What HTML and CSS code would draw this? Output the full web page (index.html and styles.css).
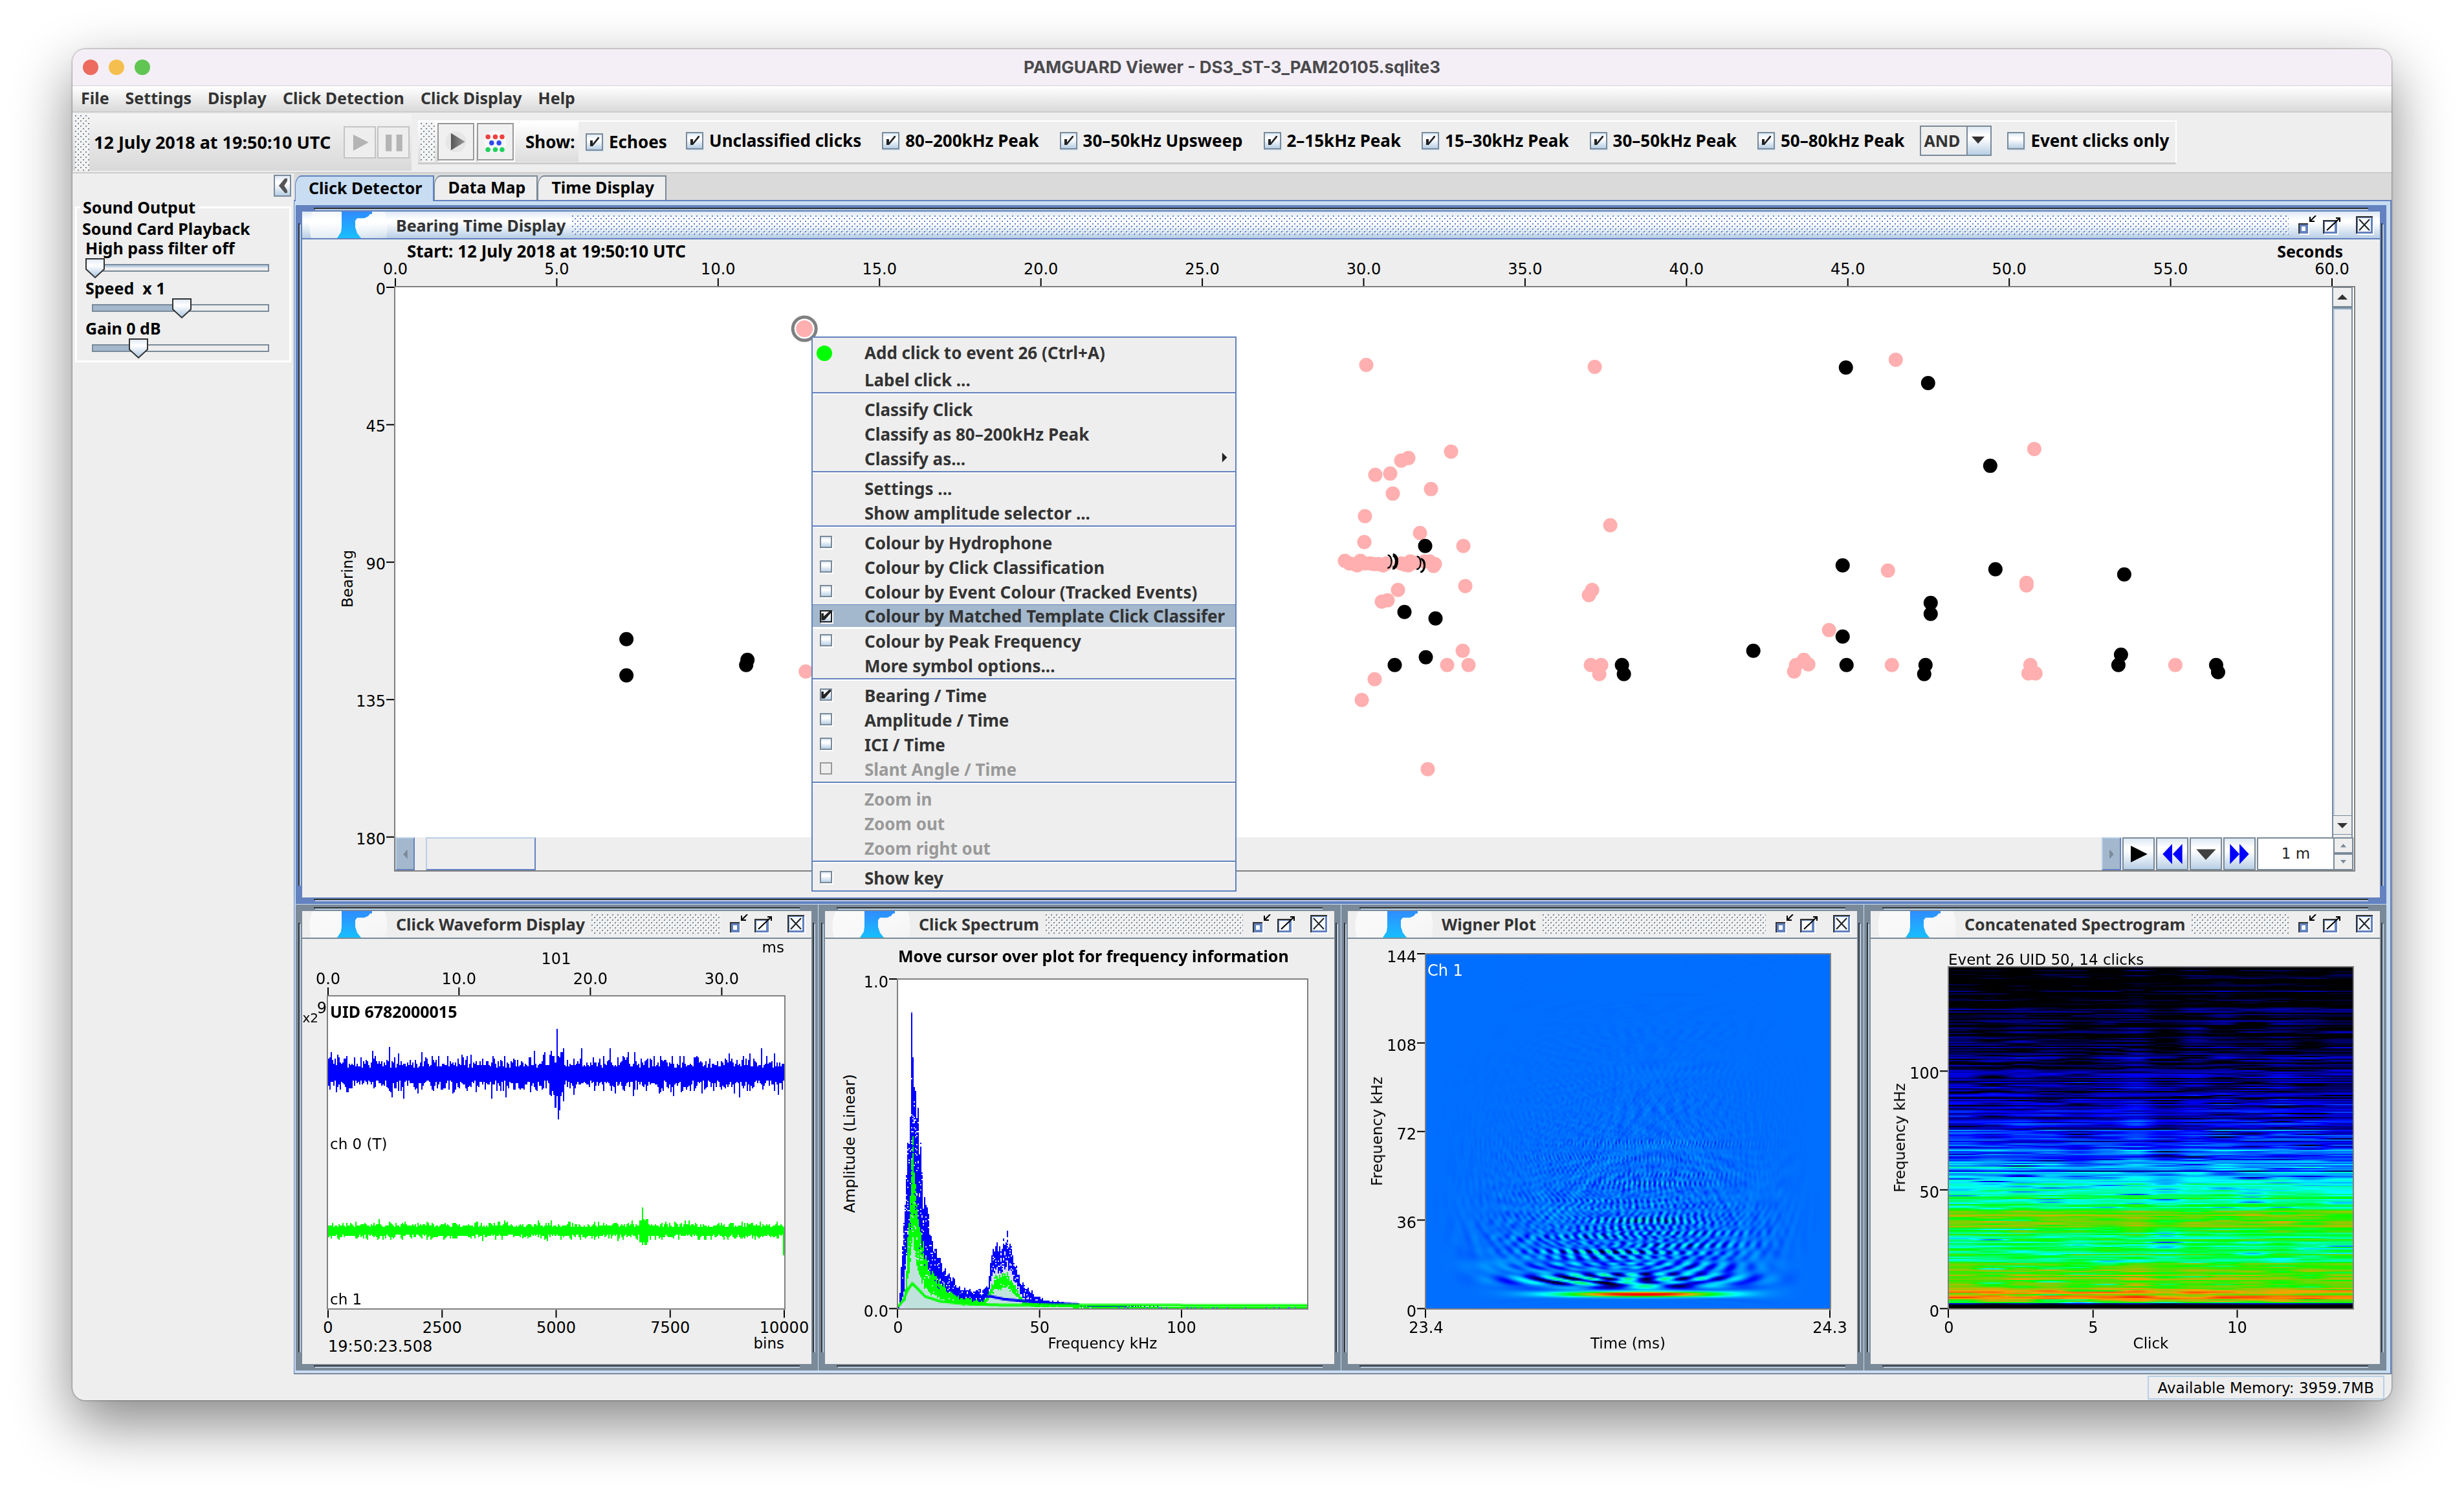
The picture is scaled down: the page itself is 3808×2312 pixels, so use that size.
FILE: index.html
```html
<!DOCTYPE html>
<html lang="en">
<head>
<meta charset="utf-8">
<title>PAMGUARD Viewer - DS3_ST-3_PAM20105.sqlite3</title>
<link rel="stylesheet" href="styles.css">
</head>
<body>
<svg class="defs" aria-hidden="true">
  <defs>
    <linearGradient id="logo-fill" x1="0" y1="0" x2="0" y2="1"><stop offset="0" stop-color="#2f8cff"/><stop offset="1" stop-color="#17bfff"/></linearGradient>
    <linearGradient id="logo-gloss" x1="0" y1="0" x2="1" y2="1"><stop offset="0" stop-color="#fff" stop-opacity=".7"/><stop offset=".6" stop-color="#fff" stop-opacity=".6"/><stop offset="1" stop-color="#fff" stop-opacity=".3"/></linearGradient>
    <linearGradient id="play-fill" x1="0" y1="0" x2="1" y2="0"><stop offset="0" stop-color="#555"/><stop offset="1" stop-color="#999"/></linearGradient>
  </defs>
  <symbol id="logo" viewBox="0 0 124 44" preserveAspectRatio="none">
    <path d="M6 0H118Q124 22 120 44H4Q-2 22 6 0Z" fill="url(#logo-gloss)"/>
    <path d="M51 0H98V4H95L92 8L86 11H75L72 15V26L75 36L81 44H44L50 34L51 26Z" fill="url(#logo-fill)"/>
  </symbol>
  <symbol id="iconify" viewBox="0 0 28 30">
    <path d="M2 14H17V30H2Z" fill="#fff"/><path d="M0 12H15V28H0Z" fill="#333"/><path d="M2 14H15V28H2Z" fill="#6382bf"/><path d="M5 17H11V24H5Z" fill="#fff"/>
    <path d="M18 2V9H25M18 9L27 0" fill="none" stroke="#000" stroke-width="2"/>
  </symbol>
  <symbol id="maximize" viewBox="0 0 28 30">
    <path d="M2 9H24V30H2Z" fill="#fff"/><path d="M0 7H22V28H0Z" fill="#333"/><path d="M2 9H22V28H2Z" fill="#6382bf"/><path d="M3 10H18V25H3Z" fill="#fff"/>
    <path d="M6 23L26 4M20 4H26V10" fill="none" stroke="#000" stroke-width="2"/>
  </symbol>
  <symbol id="close" viewBox="0 0 28 30">
    <path d="M2 3H28V30H2Z" fill="#fff"/><path d="M0 1H26V28H0Z" fill="#333"/><path d="M2 3H26V28H2Z" fill="#6382bf"/><path d="M3 4H23V25H3Z" fill="#f4f8fc"/>
    <path d="M5 6L21 23M21 6L5 23" stroke="#222" stroke-width="2"/>
  </symbol>
</svg>

<div class="window">
  <header class="titlebar">
    <div class="lights"><i class="light red"></i><i class="light amber"></i><i class="light green"></i></div>
    <h1>PAMGUARD Viewer - DS3_ST-3_PAM20105.sqlite3</h1>
    <div class="lights-spacer"></div>
  </header>

  <nav class="menubar">
    <button>File</button><button>Settings</button><button>Display</button><button>Click Detection</button><button>Click Display</button><button>Help</button>
  </nav>

  <div class="toolbars">
    <div class="clockbar">
      <i class="grip"></i>
      <span>12 July 2018 at 19:50:10 UTC</span>
      <div class="transport">
        <button class="tool" disabled aria-label="Play"><svg viewBox="0 0 50 50"><path d="M14 12L40 25L14 39Z" fill="#b4b4b4"/></svg></button>
        <button class="tool" disabled aria-label="Pause"><svg viewBox="0 0 50 50"><path d="M12 12H22V40H12ZM30 12H40V40H30Z" fill="#b4b4b4"/></svg></button>
      </div>
    </div>
    <div class="filterbar">
      <div class="filterhead">
        <i class="grip"></i>
        <button class="tool big" aria-label="Play clicks"><svg viewBox="0 0 56 56"><circle cx="28" cy="28" r="17" fill="#e6e6e6"/><path d="M20 14L43 28L20 42Z" fill="url(#play-fill)"/></svg></button>
        <button class="tool big" aria-label="Click species"><svg viewBox="0 0 56 56"><circle cx="28" cy="28" r="18" fill="#f8f8f8"/><g fill="#f04040"><circle cx="16" cy="20" r="4"/><circle cx="28" cy="20" r="4"/><circle cx="39" cy="20" r="4"/></g><g fill="#3048f0"><circle cx="22" cy="30" r="4"/><circle cx="34" cy="30" r="4"/></g><g fill="#20d060"><circle cx="16" cy="41" r="4"/><circle cx="28" cy="41" r="4"/><circle cx="39" cy="41" r="4"/></g></svg></button>
        <span>Show:</span>
      </div>
      <label class="echo"><input type="checkbox" checked>Echoes</label>
      <div class="filters">
        <label><input type="checkbox" checked>Unclassified clicks</label>
        <label><input type="checkbox" checked>80–200kHz Peak</label>
        <label><input type="checkbox" checked>30–50kHz Upsweep</label>
        <label><input type="checkbox" checked>2–15kHz Peak</label>
        <label><input type="checkbox" checked>15–30kHz Peak</label>
        <label><input type="checkbox" checked>30–50kHz Peak</label>
        <label><input type="checkbox" checked>50–80kHz Peak</label>
        <select aria-label="Combine"><option>AND</option><option>OR</option></select>
        <label><input type="checkbox">Event clicks only</label>
      </div>
    </div>
  </div>

  <div class="workspace">
    <aside class="sidebar">
      <button class="collapse" aria-label="Hide side panel"><svg viewBox="0 0 24 32"><path d="M16 4L6 16L16 28H20V24L15 16L20 8V4Z" fill="#555"/></svg></button>
      <fieldset class="sound">
        <legend>Sound Output</legend>
        <p>Sound Card Playback</p>
        <label for="hp">High pass filter off</label>
        <input id="hp" type="range" min="0" max="100" value="0">
        <label for="speed">Speed&nbsp; x 1</label>
        <input id="speed" type="range" min="0" max="100" value="51">
        <label for="gain">Gain 0 dB</label>
        <input id="gain" type="range" min="0" max="100" value="23">
      </fieldset>
    </aside>

    <main class="content">
      <div class="tabs"><button class="tab selected">Click Detector</button><button class="tab">Data Map</button><button class="tab">Time Display</button></div>
      <div class="desk">

        <section class="frame active">
          <header class="framebar">
            <svg class="logo"><use href="#logo"/></svg><h2>Bearing Time Display</h2><i class="bumps"></i>
            <button aria-label="Iconify"><svg><use href="#iconify"/></svg></button><button aria-label="Maximize"><svg><use href="#maximize"/></svg></button><button class="shut" aria-label="Close"><svg><use href="#close"/></svg></button>
          </header>
          <div class="plot bearing">
            <span class="ylabel">Bearing</span>
            <div class="area">
              <svg class="chart" id="bearing-chart">
                <text class="strong wide" x="18" y="-46">Start: 12 July 2018 at 19:50:10 UTC</text>
                <text class="strong end" x="100%" dx="17" y="-46">Seconds</text>
              </svg>
              <div class="vscroll"><button aria-label="Up"><svg viewBox="0 0 28 28"><path d="M6 18L14 10L22 18Z"/></svg></button><i></i><button aria-label="Down"><svg viewBox="0 0 28 28"><path d="M6 11L14 19L22 11Z"/></svg></button></div>
              <div class="hscroll">
                <button class="nudge" aria-label="Left"><svg viewBox="0 0 28 50"><path d="M18 18V34L11 26Z"/></svg></button>
                <i class="thumb"></i>
                <button class="nudge right" aria-label="Right"><svg viewBox="0 0 28 50"><path d="M11 18V34L18 26Z"/></svg></button>
                <button aria-label="Play"><svg viewBox="0 0 50 50"><path d="M12 12L40 26L12 40Z" fill="#000"/></svg></button>
                <button aria-label="Back"><svg viewBox="0 0 50 50"><path d="M25 9V43L9 26ZM42 9V43L26 26Z" fill="#00f"/></svg></button>
                <button aria-label="Jump"><svg viewBox="0 0 50 50"><path d="M9 18H42L25 36Z" fill="#404040"/></svg></button>
                <button aria-label="Forward"><svg viewBox="0 0 50 50"><path d="M25 9V43L41 26ZM9 9V43L25 26Z" fill="#00f"/></svg></button>
                <input class="span" value="1 m" aria-label="Display length">
                <div class="spinner"><button aria-label="More"><svg viewBox="0 0 28 24"><path d="M9 15L14 9L19 15Z"/></svg></button><button aria-label="Less"><svg viewBox="0 0 28 24"><path d="M9 9L14 15L19 9Z"/></svg></button></div>
              </div>

              <div class="popup">
                <button class="item first"><i class="eventdot"></i>Add click to event 26 (Ctrl+A)</button>
                <button class="item">Label click ...</button>
                <hr>
                <button class="item">Classify Click</button>
                <button class="item">Classify as 80–200kHz Peak</button>
                <button class="item">Classify as...<svg class="submenu" viewBox="0 0 12 20"><path d="M1 1L10 10L1 19Z" fill="#222"/></svg></button>
                <hr>
                <button class="item">Settings ...</button>
                <button class="item">Show amplitude selector ...</button>
                <hr>
                <label class="item"><input type="checkbox">Colour by Hydrophone</label>
                <label class="item"><input type="checkbox">Colour by Click Classification</label>
                <label class="item"><input type="checkbox">Colour by Event Colour (Tracked Events)</label>
                <label class="item hot"><input type="checkbox" checked>Colour by Matched Template Click Classifer</label>
                <label class="item"><input type="checkbox">Colour by Peak Frequency</label>
                <button class="item">More symbol options...</button>
                <hr>
                <label class="item"><input type="checkbox" checked>Bearing / Time</label>
                <label class="item"><input type="checkbox">Amplitude / Time</label>
                <label class="item"><input type="checkbox">ICI / Time</label>
                <label class="item off"><input type="checkbox" disabled>Slant Angle / Time</label>
                <hr>
                <button class="item" disabled>Zoom in</button>
                <button class="item" disabled>Zoom out</button>
                <button class="item" disabled>Zoom right out</button>
                <hr>
                <label class="item"><input type="checkbox">Show key</label>
              </div>
            </div>
          </div>
        </section>

        <section class="frame">
          <header class="framebar">
            <svg class="logo"><use href="#logo"/></svg><h2>Click Waveform Display</h2><i class="bumps"></i>
            <button aria-label="Iconify"><svg><use href="#iconify"/></svg></button><button aria-label="Maximize"><svg><use href="#maximize"/></svg></button><button class="shut" aria-label="Close"><svg><use href="#close"/></svg></button>
          </header>
          <div class="plot waveform">
            <div class="area">
              <canvas id="waveform" width="352" height="241"></canvas>
              <svg class="chart">
                <g class="ticks"><path d="M0 -2V-14"/><line x1="28.7%" x2="28.7%" y1="-2" y2="-14"/><line x1="57.5%" x2="57.5%" y1="-2" y2="-14"/><line x1="86.3%" x2="86.3%" y1="-2" y2="-14"/></g>
                <svg class="below" y="100%"><path class="ticks" d="M0 2V14"/><g class="ticks"><line x1="25%" x2="25%" y1="2" y2="14"/><line x1="50%" x2="50%" y1="2" y2="14"/><line x1="75%" x2="75%" y1="2" y2="14"/><line x1="100%" x2="100%" y1="2" y2="14"/></g>
                  <g class="mid"><text y="38">0</text><text x="25%" y="38">2500</text><text x="50%" y="38">5000</text><text x="75%" y="38">7500</text><text x="100%" y="38">10000</text></g>
                  <text y="67">19:50:23.508</text><text class="end name" x="100%" y="62">bins</text></svg>
                <text class="end name" x="100%" y="-68">ms</text>
                <g class="mid"><text x="50%" y="-50">101</text><text y="-19">0.0</text><text x="28.7%" y="-19">10.0</text><text x="57.5%" y="-19">20.0</text><text x="86.3%" y="-19">30.0</text></g>
                <text class="end small" x="-15" y="40">x2</text><text class="end" x="-2" y="26">9</text>
                <text class="strong" x="3" y="33">UID 6782000015</text>
                <text class="name" x="3" y="49%">ch 0 (T)</text>
                <text class="name" x="3" y="100%" dy="-6">ch 1</text>
              </svg>
            </div>
          </div>
        </section>

        <section class="frame">
          <header class="framebar">
            <svg class="logo"><use href="#logo"/></svg><h2>Click Spectrum</h2><i class="bumps"></i>
            <button aria-label="Iconify"><svg><use href="#iconify"/></svg></button><button aria-label="Maximize"><svg><use href="#maximize"/></svg></button><button class="shut" aria-label="Close"><svg><use href="#close"/></svg></button>
          </header>
          <div class="plot spectrum">
            <span class="ylabel">Amplitude (Linear)</span>
            <div class="area">
              <canvas id="spectrum" width="316" height="254"></canvas>
              <svg class="chart">
                <text class="strong" x="0" y="-27">Move cursor over plot for frequency information</text>
                <g class="ticks"><line x1="-14" x2="-2" y1="-1" y2="-1"/><line x1="-14" x2="-2" y1="100%" y2="100%"/></g>
                <g class="end"><text x="-15" y="12">1.0</text><text x="-15" y="100%" dy="13">0.0</text></g>
                <svg class="below" y="100%"><g class="ticks"><line x1="-1" x2="-1" y1="1" y2="14"/><line x1="34.6%" x2="34.6%" y1="2" y2="14"/><line x1="69.3%" x2="69.3%" y1="2" y2="14"/></g>
                  <g class="mid"><text y="38">0</text><text x="34.6%" y="38">50</text><text x="69.3%" y="38">100</text><text class="name" x="50%" y="62">Frequency kHz</text></g></svg>
              </svg>
            </div>
          </div>
        </section>

        <section class="frame">
          <header class="framebar">
            <svg class="logo"><use href="#logo"/></svg><h2>Wigner Plot</h2><i class="bumps"></i>
            <button aria-label="Iconify"><svg><use href="#iconify"/></svg></button><button aria-label="Maximize"><svg><use href="#maximize"/></svg></button><button class="shut" aria-label="Close"><svg><use href="#close"/></svg></button>
          </header>
          <div class="plot wigner">
            <span class="ylabel">Frequency kHz</span>
            <div class="area">
              <canvas id="wigner" width="256" height="256" class="smooth"></canvas>
              <svg class="chart">
                <text class="light-text" x="2" y="33">Ch 1</text>
                <g class="ticks"><line x1="-14" x2="-2" y1="-1" y2="-1"/><line x1="-14" x2="-2" y1="25%" y2="25%"/><line x1="-14" x2="-2" y1="50%" y2="50%"/><line x1="-14" x2="-2" y1="75%" y2="75%"/><line x1="-14" x2="-2" y1="100%" y2="100%"/></g>
                <g class="end"><text x="-15" y="12">144</text><text x="-15" y="25%" dy="12">108</text><text x="-15" y="50%" dy="12">72</text><text x="-15" y="75%" dy="12">36</text><text x="-15" y="100%" dy="13">0</text></g>
                <svg class="below" y="100%"><g class="ticks"><line x1="-1" x2="-1" y1="1" y2="14"/><line x1="100%" x2="100%" y1="2" y2="14"/></g>
                  <g class="mid"><text y="38">23.4</text><text x="100%" y="38">24.3</text><text class="name" x="50%" y="62">Time (ms)</text></g></svg>
              </svg>
            </div>
          </div>
        </section>

        <section class="frame">
          <header class="framebar">
            <svg class="logo"><use href="#logo"/></svg><h2>Concatenated Spectrogram</h2><i class="bumps"></i>
            <button aria-label="Iconify"><svg><use href="#iconify"/></svg></button><button aria-label="Maximize"><svg><use href="#maximize"/></svg></button><button class="shut" aria-label="Close"><svg><use href="#close"/></svg></button>
          </header>
          <div class="plot spectrogram">
            <span class="ylabel">Frequency kHz</span>
            <div class="area">
              <canvas id="spectrogram" width="623" height="262"></canvas>
              <svg class="chart">
                <text class="name" x="-1" y="-4">Event 26 UID 50, 14 clicks</text>
                <g class="ticks"><line x1="-14" x2="-2" y1="30.4%" y2="30.4%"/><line x1="-14" x2="-2" y1="65.2%" y2="65.2%"/><line x1="-14" x2="-2" y1="100%" y2="100%"/></g>
                <g class="end"><text x="-15" y="30.4%" dy="12">100</text><text x="-15" y="65.2%" dy="12">50</text><text x="-15" y="100%" dy="13">0</text></g>
                <svg class="below" y="100%"><g class="ticks"><line x1="-1" x2="-1" y1="1" y2="14"/><line x1="35.7%" x2="35.7%" y1="2" y2="14"/><line x1="71.4%" x2="71.4%" y1="2" y2="14"/></g>
                  <g class="mid"><text y="38">0</text><text x="35.7%" y="38">5</text><text x="71.4%" y="38">10</text><text class="name" x="50%" y="62">Click</text></g></svg>
              </svg>
            </div>
          </div>
        </section>

      </div>
    </main>
  </div>
  <footer class="status"><span>Available Memory: 3959.7MB</span></footer>
</div>
<script src="plots.js"></script>
</body>
</html>
```
FILE: styles.css
```css
:root {
  --steel: #7a8a99;
  --blue: #6382bf;
  --panel: #eeeeee;
  --ink: #333333;
  --ocean: linear-gradient(#dde8f3, #ffffff 30%, #ffffff 40%, #b8cfe5);
  --edge: var(--steel);
}
* { box-sizing: border-box; }
body {
  margin: 0;
  height: 100vh;
  padding: 76px 112px 148px;
  display: flex;
  background: #fff;
  font: 700 25px/32px "Noto Sans", "Open Sans", sans-serif;
  color: #000;
}
button, select, input { font: inherit; color: inherit; margin: 0; }
button { padding: 0; border: 0; background: none; }
h1, h2, p { margin: 0; font: inherit; }
svg { display: block; }
.defs { position: absolute; width: 0; height: 0; }

.window {
  flex: 1;
  min-width: 0;
  display: flex;
  flex-direction: column;
  border-radius: 20px;
  overflow: clip;
  background: var(--panel);
  box-shadow: 0 0 2px 1px rgba(0,0,0,.3), 0 36px 90px rgba(0,0,0,.48);
}
.titlebar {
  height: 57px;
  flex: none;
  display: flex;
  align-items: center;
  justify-content: space-between;
  padding: 0 16px;
  background: #f4eff7;
  border-bottom: 1px solid #d6d2d8;
}
.titlebar h1 { font: 700 26px/32px Inter, "Liberation Sans", sans-serif; color: #4b4a4c; }
.lights, .lights-spacer { display: flex; gap: 16px; width: 104px; }
.light { width: 24px; height: 24px; border-radius: 50%; }
.red { background: #ec6a5e; }
.amber { background: #f5bf4f; }
.green { background: #61c554; }

.menubar {
  display: flex;
  flex: none;
  gap: 25px;
  height: 41px;
  padding: 0 13px 4px;
  align-items: center;
  background: linear-gradient(#fff, #dadada);
  border-bottom: 2px solid #cccccc;
  color: var(--ink);
}
.toolbars { display: flex; flex: none; align-items: flex-start; height: 94px; padding-top: 2px; border-bottom: 2px solid #cccccc; font-size: 26px; }
.clockbar {
  display: flex;
  align-items: center;
  height: 88px;
  width: 524px;
  padding-left: 4px;
  background: linear-gradient(#f4f4f4, #d9d9d9);
}
.clockbar span { flex: 1; padding-left: 7px; font-size: 27px; white-space: nowrap; }
.grip {
  width: 22px;
  align-self: stretch;
  background:
    conic-gradient(from 270deg at 2px 2px, var(--steel) 90deg, transparent 0) 0 2px / 8px 8px,
    conic-gradient(from 270deg at 2px 2px, var(--steel) 90deg, transparent 0) 4px 6px / 8px 8px,
    #f4f4f4;
}
.transport { display: flex; gap: 2px; padding-right: 3px; }
.tool { width: 50px; height: 50px; border: 2px solid #c4c4c4; background: #eee; }
.tool.big { width: 57px; height: 58px; border-color: #999; box-shadow: 2px 2px 0 #fff; margin-left: 4px; background: #f0f0f0; }
.tool svg { width: 100%; height: 100%; }
.filterbar {
  display: flex;
  margin: 10px 0 0 10px;
  height: 68px;
  border-top: 2px solid #fff;
  border-right: 2px solid #fff;
  border-bottom: 3px solid #cccccc;
}
.filterhead { display: flex; align-items: center; width: 248px; height: 62px; padding-left: 4px; background: linear-gradient(#fff, #dcdcdc); }
.filterhead span { padding-left: 18px; }
.filterbar label { display: flex; align-items: center; gap: 9px; white-space: nowrap; }
.echo { padding: 0 0 0 11px; width: 160px; height: 62px; background: var(--panel); }
.filters { display: flex; align-items: center; gap: 32px; padding: 0 10px 0 6px; height: 58px; }
input[type="checkbox"] {
  appearance: none;
  flex: none;
  width: 27px;
  height: 27px;
  border: 2px solid var(--steel);
  background: var(--ocean);
  box-shadow: 1px 2px 0 #dbe7f2;
}
input[type="checkbox"]:checked {
  background: url("data:image/svg+xml,%3Csvg xmlns='http://www.w3.org/2000/svg' viewBox='0 0 23 23'%3E%3Cpath d='M5 9h4v5L17 4h2v2L9 18H5z' fill='%23222'/%3E%3C/svg%3E"), var(--ocean);
}
.filters select {
  appearance: none;
  width: 111px;
  height: 47px;
  margin: 0 -8px;
  padding: 0 0 0 4px;
  border: 2px solid var(--steel);
  border-radius: 0;
  color: var(--ink);
  font-size: 25px;
  background:
    url("data:image/svg+xml,%3Csvg xmlns='http://www.w3.org/2000/svg' viewBox='0 0 20 12'%3E%3Cpath d='M0 0h20L10 11z' fill='%23333'/%3E%3C/svg%3E") right 9px center / 20px 12px no-repeat,
    linear-gradient(90deg, transparent 70px, var(--steel) 70px, var(--steel) 72px, transparent 72px),
    linear-gradient(90deg, #eee 70px, transparent 70px),
    var(--ocean);
}

.workspace { flex: 1; min-height: 0; display: flex; }
.sidebar { width: 342px; padding: 2px 4px; display: flex; flex-direction: column; }
.collapse { align-self: flex-end; width: 27px; height: 34px; border: 2px solid var(--steel); background: var(--ocean); }
.collapse svg { width: 100%; height: 100%; }
.sound { margin: 0; padding: 0 8px; border: 3px solid #fff; width: 334px; height: 256px; display: flex; flex-direction: column; }
.sound legend { padding: 0 4px; margin-left: -3px; }
.sound p { line-height: 34px; }
.sound label { padding-left: 5px; line-height: 26px; }
input[type="range"] { appearance: none; width: 284px; height: 36px; margin-left: 5px; background: none; }
input[type="range"]::-webkit-slider-runnable-track { height: 12px; margin: 0 0 0 10px; border: 2px solid var(--steel); background: linear-gradient(#b8cfe5 3px, #eee 3px); }
#speed::-webkit-slider-runnable-track { background: linear-gradient(90deg, #a3b8cc 50%, #eee 50%); }
#gain::-webkit-slider-runnable-track { background: linear-gradient(90deg, #a3b8cc 24%, #eee 24%); }
input[type="range"]::-webkit-slider-thumb {
  appearance: none;
  width: 30px;
  height: 32px;
  margin-top: -11px;
  background: url("data:image/svg+xml,%3Csvg xmlns='http://www.w3.org/2000/svg' viewBox='0 0 30 32'%3E%3ClinearGradient id='g' x2='0' y2='1'%3E%3Cstop stop-color='%23dde8f3'/%3E%3Cstop offset='.35' stop-color='%23fff'/%3E%3Cstop offset='1' stop-color='%23a8c4e0'/%3E%3C/linearGradient%3E%3Cpath d='M1 1h28v16L15 30 1 17z' fill='url(%23g)' stroke='%23333' stroke-width='2'/%3E%3C/svg%3E");
}
#hp::-webkit-slider-thumb { margin-left: -12px; }

.content { flex: 1; min-width: 0; min-height: 0; display: flex; flex-direction: column; }
.tabs { display: flex; flex: none; align-items: flex-end; height: 43px; padding: 0 0 2px 2px; background: #dadada; border-bottom: 2px solid var(--blue); }
.tab { height: 38px; padding: 0 17px 4px 20px; border: 2px solid var(--steel); border-bottom: 0; border-left-width: 1px; border-top-left-radius: 10px 16px; background: #eee; margin-bottom: -2px; }
.tab.selected { height: 40px; background: #c8ddf2; border-color: var(--blue); margin-bottom: -4px; }
.desk {
  flex: 1;
  min-height: 0;
  display: grid;
  grid-template-columns: repeat(4, minmax(0, 1fr));
  grid-template-rows: minmax(0, 1079fr) minmax(0, 720fr);
  gap: 1px;
  padding: 6px 6px 4px 2px;
  border-left: 1px solid var(--blue);
  border-right: 2px solid var(--blue);
  border-bottom: 2px solid var(--steel);
  background: #c8ddf2;
}
.frame {
  display: flex;
  flex-direction: column;
  min-width: 0;
  min-height: 0;
  padding: 10px;
  background:
    linear-gradient(#333, #333) 28px 4px / calc(100% - 56px) 2px no-repeat,
    linear-gradient(#b8cfe5, #b8cfe5) 30px 6px / calc(100% - 58px) 2px no-repeat,
    linear-gradient(#333, #333) 28px calc(100% - 6px) / calc(100% - 56px) 2px no-repeat,
    linear-gradient(#b8cfe5, #b8cfe5) 30px calc(100% - 4px) / calc(100% - 58px) 2px no-repeat,
    linear-gradient(#333, #333) 4px 28px / 2px calc(100% - 56px) no-repeat,
    linear-gradient(#b8cfe5, #b8cfe5) 6px 30px / 2px calc(100% - 58px) no-repeat,
    linear-gradient(#333, #333) calc(100% - 6px) 28px / 2px calc(100% - 56px) no-repeat,
    linear-gradient(#b8cfe5, #b8cfe5) calc(100% - 4px) 30px / 2px calc(100% - 58px) no-repeat,
    var(--edge);
}
.frame.active { --edge: var(--blue); grid-column: 1 / -1; }
.framebar {
  display: flex;
  align-items: center;
  flex: none;
  height: 43px;
  padding: 0 9px 0 10px;
  border-bottom: 2px solid var(--edge);
  background: var(--panel);
  color: var(--ink);
}
.active .framebar { background: var(--ocean); }
.logo { width: 124px; height: 41px; flex: none; }
.framebar h2 { padding: 0 10px 0 11px; white-space: nowrap; }
.bumps {
  flex: 1;
  height: 30px;
  margin-right: 15px;
  background:
    conic-gradient(from 270deg at 2px 2px, var(--edge) 90deg, transparent 0) 0 0 / 8px 8px,
    conic-gradient(from 270deg at 2px 2px, var(--edge) 90deg, transparent 0) 4px 4px / 8px 8px,
    conic-gradient(from 270deg at 2px 2px, #fff 90deg, transparent 0) 2px 2px / 8px 8px,
    conic-gradient(from 270deg at 2px 2px, #fff 90deg, transparent 0) 6px 6px / 8px 8px;
}
.framebar button { margin-right: 10px; }
.framebar .shut { margin: 0 0 0 13px; }
.framebar button svg { width: 28px; height: 30px; }

.plot { flex: 1; min-height: 0; display: grid; grid-template-rows: minmax(0, 1fr); background: var(--panel); }
.bearing { grid-template-columns: 142px minmax(0, 1fr); padding: 72px 38px 40px 0; }
.waveform { grid-template-columns: minmax(0, 1fr); padding: 87px 40px 84px 38px; }
.spectrum { grid-template-columns: 111px minmax(0, 1fr); padding: 61px 40px 84px 0; }
.wigner { grid-template-columns: 119px minmax(0, 1fr); padding: 22px 40px 84px 0; }
.spectrogram { grid-template-columns: 119px minmax(0, 1fr); padding: 42px 40px 84px 0; }
.ylabel { writing-mode: vertical-rl; transform: rotate(180deg); place-self: center start; font: 400 23px/32px "DejaVu Sans", sans-serif; margin-left: 22px; white-space: nowrap; }
.bearing .ylabel { margin-left: 54px; }
.wigner .ylabel, .spectrogram .ylabel { margin-left: 29px; }
.area { display: grid; grid-template: minmax(0, 1fr) / minmax(0, 1fr); border: 2px solid #808080; background: #fff; min-height: 0; }
.area canvas { grid-area: 1 / 1; width: 100%; height: 100%; min-height: 0; image-rendering: pixelated; }
.area canvas.smooth { image-rendering: auto; }
.chart { grid-area: 1 / 1; width: 100%; height: 100%; overflow: visible; font: 400 24px "DejaVu Sans", sans-serif; }
.below { width: 100%; overflow: visible; }
.ticks { stroke: #000; stroke-width: 2; }
.mid { text-anchor: middle; }
.end { text-anchor: end; }
.name { font-size: 23px; }
.small { font-size: 20px; }
.strong { font: 700 25px "Noto Sans", sans-serif; }
.wide { font-size: 26px; }
.light-text { fill: #fff; }

.bearing .area { position: relative; grid-template: minmax(0, 1fr) 51px / minmax(0, 1fr) 34px; }
.vscroll { display: flex; flex-direction: column; width: 32px; padding-bottom: 4px; border-left: 2px solid var(--steel); border-right: 2px solid var(--steel); background: #eee; }
.vscroll button { height: 30px; background: #eee; border-bottom: 1px solid var(--steel); border-top: 1px solid var(--steel); }
.vscroll i { flex: 1; border: 2px solid var(--steel); border-width: 3px 0 0; box-shadow: inset 2px 2px 0 #b8cfe5; }
.vscroll svg { fill: #333; }
.hscroll { grid-column: 1 / -1; display: flex; align-items: stretch; gap: 2px; padding-right: 1px; background: #eee; }
.hscroll > button { width: 50px; border: 2px solid var(--steel); background: var(--ocean); }
.hscroll .nudge { width: 30px; background: #a3b8cc; border: 2px solid var(--blue); border-top-color: #b8cfe5; border-left-color: #b8cfe5; }
.nudge svg { fill: var(--steel); width: 100%; }
.hscroll .right { margin-left: auto; }
.thumb { width: 170px; margin-left: 15px; border: 2px solid var(--blue); border-top-color: #b8cfe5; border-left-color: #b8cfe5; }
.hscroll .span { width: 118px; border: 2px solid var(--steel); border-right: 0; background: #fff; text-align: center; font: 400 23px/32px "DejaVu Sans", sans-serif; color: #222; padding: 0; }
.spinner { display: flex; flex-direction: column; width: 31px; margin-left: -2px; }
.spinner button { flex: 1; min-height: 0; border: 2px solid var(--steel); background: #eee; fill: var(--steel); }
.spinner svg { width: 100%; height: 100%; }

.popup {
  position: absolute;
  left: 643px;
  top: 76px;
  width: 657px;
  display: flex;
  flex-direction: column;
  border: 2px solid var(--blue);
  background: #eee;
  color: var(--ink);
  font-size: 26px;
}
.popup .item { position: relative; display: flex; align-items: center; height: 38px; padding-left: 80px; text-align: left; white-space: nowrap; }
.popup .first { height: 46px; }
.popup hr { width: 100%; height: 8px; margin: 0; border: 0; border-top: 2px solid var(--blue); background: linear-gradient(#fff 2px, #eee 2px); }
.popup .hot { background: #a3b8cc; border-top: 1px solid var(--blue); border-bottom: 3px solid #fff; }
.popup .off, .popup .item:disabled { color: #999; }
.popup input { position: absolute; left: 11px; top: 8px; width: 19px; height: 19px; box-shadow: 2px 2px 0 #fff; }
.popup .off input { border-color: #999; background: #eee; box-shadow: none; }
.popup input:checked { background: url("data:image/svg+xml,%3Csvg xmlns='http://www.w3.org/2000/svg' viewBox='0 0 16 16'%3E%3Cpath d='M2 4h3v4L14 0h2v2L6 13H2z' fill='%23222'/%3E%3C/svg%3E") border-box, var(--ocean); }
.popup .hot input { border-color: #222; }
.eventdot { position: absolute; left: 6px; top: 12px; width: 24px; height: 24px; border-radius: 50%; background: #0f0; }
.submenu { position: absolute; right: 11px; top: 8px; width: 10px; height: 18px; }

.status { display: flex; flex: none; justify-content: flex-end; height: 40px; padding: 2px 11px 1px 0; }
.status span { padding: 0 14px 0 14px; border: 2px solid #b8cfe5; font: 400 23px/34px "DejaVu Sans", sans-serif; }
```
FILE: plots.js
```js
// Repeatable pseudo-random source so every load draws the same data.
function source(seed) {
  return function () {
    seed = (seed * 1664525 + 1013904223) >>> 0;
    return seed / 4294967296;
  };
}
function gauss(rnd) {
  return Math.sqrt(-2 * Math.log(rnd() + 1e-9)) * Math.cos(2 * Math.PI * rnd());
}
function lerpTable(table, x) {
  if (x <= table[0][0]) return table[0][1];
  for (let i = 1; i < table.length; i++) {
    if (x <= table[i][0]) {
      const [x0, y0] = table[i - 1], [x1, y1] = table[i];
      return y0 + (y1 - y0) * (x - x0) / (x1 - x0);
    }
  }
  return table[table.length - 1][1];
}
const RAMP = [[0, [0, 0, 0]], [0.2, [0, 0, 255]], [0.42, [0, 255, 255]], [0.6, [0, 255, 0]], [0.8, [255, 160, 0]], [1, [255, 0, 0]]];
function ramp(v) {
  v = Math.max(0, Math.min(1, v));
  for (let i = 1; i < RAMP.length; i++) {
    if (v <= RAMP[i][0]) {
      const [a, ca] = RAMP[i - 1], [b, cb] = RAMP[i];
      const t = (v - a) / (b - a);
      return ca.map((c, k) => c + (cb[k] - c) * t);
    }
  }
  return RAMP[RAMP.length - 1][1];
}

// Bearing time display: click symbols in plot units of 2992 x 850.
(function () {
  const svg = document.getElementById("bearing-chart");
  const NS = "http://www.w3.org/2000/svg";
  const W = 2992, H = 850;
  function add(tag, attrs, text) {
    const el = document.createElementNS(NS, tag);
    for (const k in attrs) el.setAttribute(k, attrs[k]);
    if (text) el.textContent = text;
    svg.appendChild(el);
  }
  for (let i = 0; i <= 12; i++) {
    const x = (i / 12 * 100) + "%";
    add("line", { x1: x, x2: x, y1: -2, y2: -14, class: "ticks" });
    add("text", { x: x, y: -20, class: "mid" }, (i * 5).toFixed(1));
  }
  for (let i = 0; i <= 4; i++) {
    const y = (i * 25) + "%";
    add("line", { x1: -14, x2: -2, y1: y, y2: y, class: "ticks" });
    add("text", { x: -15, y: y, dy: 11, class: "end" }, String(i * 45));
  }
  function dot(p, color) {
    add("circle", { cx: (p[0] / W * 100) + "%", cy: (p[1] / H * 100) + "%", r: 11, fill: color });
  }
  const pink = "#ffafaf", black = "#000";
  const echoes = [[1500, 120], [1853, 123], [1565, 264], [1554, 268], [1631, 254], [1514, 290], [1537, 288], [1541, 319], [1600, 312],
    [1498, 354], [1877, 368], [1583, 380], [1497, 394], [1650, 400], [1549, 468], [1533, 484], [1524, 486], [1653, 462],
    [1849, 468], [1844, 476], [1649, 562], [1625, 584], [1658, 584], [1513, 606], [1493, 638], [1595, 745],
    [1847, 584], [1863, 584], [1860, 598], [2215, 530], [2176, 576], [2164, 584], [2161, 594], [2183, 583],
    [2318, 112], [2532, 250], [2306, 438], [2520, 457], [2520, 461], [2312, 584], [2526, 584], [2523, 597], [2534, 597], [2750, 584], [634, 594],
    [1467, 423], [1474, 427], [1482, 428], [1491, 423], [1486, 430], [1498, 427], [1506, 427], [1512, 428], [1519, 428], [1526, 430], [1531, 427],
    [1554, 427], [1560, 429], [1568, 424], [1565, 430], [1574, 426], [1590, 424], [1598, 424], [1606, 428], [1604, 431]];
  const clicks = [[1591, 400], [1559, 502], [1607, 512], [1592, 572], [1544, 584], [1895, 584], [1898, 598], [2098, 562],
    [2241, 124], [2368, 148], [2464, 276], [2236, 430], [2472, 436], [2671, 444], [2372, 488], [2372, 505], [2236, 540], [2242, 584],
    [2364, 584], [2362, 598], [2666, 568], [2662, 584], [2813, 584], [2816, 595], [357, 544], [357, 600], [544, 576], [542, 584]];
  echoes.forEach(p => dot(p, pink));
  clicks.forEach(p => dot(p, black));
  // Right-hand rims of clicks that lie partly under the echoes.
  function rim(x, y, w) {
    add("ellipse", { cx: (x / W * 100) + "%", cy: (y / H * 100) + "%", rx: 6, ry: 10, fill: "none", stroke: black, "stroke-width": w, "stroke-dasharray": "13 27", "stroke-dashoffset": 0 });
    add("ellipse", { cx: (x / W * 100) + "%", cy: (y / H * 100) + "%", rx: 6, ry: 10, fill: "none", stroke: black, "stroke-width": w, "stroke-dasharray": "0 38 13 20" });
  }
  rim(1541, 424, 5); rim(1533, 424, 2); rim(1578, 426, 2); rim(1584, 430, 3);
  const cx = (632 / W * 100) + "%", cy = (64 / H * 100) + "%";
  add("circle", { cx, cy, r: 18, fill: "#fff", stroke: "#808080", "stroke-width": 5 });
  add("circle", { cx, cy, r: 13, fill: pink });
})();

// Click waveform: two channels of min/max bars.
(function () {
  const c = document.getElementById("waveform"), g = c.getContext("2d"), rnd = source(7);
  function channel(mid, base, spread, color, boost) {
    g.fillStyle = color;
    for (let x = 0; x < c.width; x++) {
      const up = base + Math.abs(gauss(rnd)) * spread, down = base + Math.abs(gauss(rnd)) * spread;
      const [bu, bd] = boost(x);
      const top = Math.round(mid - up - bu), end = Math.round(mid + down + bd);
      g.fillRect(x, top, 1, end - top);
    }
  }
  channel(60, 5, 5, "#0000ff", x => {
    if (x === 176) return [28, 10];
    if (x === 175 || x === 178) return [4, 20];
    if (x === 177) return [9, 24];
    return Math.abs(x - 176) < 6 ? [6, 7] : [0, 0];
  });
  channel(181, 3, 2, "#00ff00", x => {
    if (x === 242) return [14, 6];
    if (x === 351) return [0, 16];
    return Math.abs(x - 243) < 4 ? [5, 5] : [0, 0];
  });
})();

// Click spectrum: noisy spectra with averages on top.
(function () {
  const c = document.getElementById("spectrum"), g = c.getContext("2d"), rnd = source(21);
  const W = c.width, H = c.height;
  const blue = [[0, 0.01], [1, 0.05], [3, 0.18], [5, 0.36], [7, 0.5], [9, 0.66], [10, 0.74], [11, 0.76], [12, 0.7], [14, 0.67], [16, 0.54], [18, 0.38], [20, 0.32], [24, 0.24], [28, 0.17], [33, 0.13], [39, 0.1], [47, 0.065], [57, 0.05], [65, 0.055], [69, 0.07], [72, 0.17], [76, 0.2], [79, 0.2], [83, 0.23], [86, 0.19], [90, 0.13], [94, 0.08], [103, 0.05], [112, 0.025], [140, 0.012], [180, 0.006], [316, 0.003]];
  const green = [[4, 0], [6, 0.12], [8, 0.28], [10, 0.44], [11, 0.48], [13, 0.37], [17, 0.22], [23, 0.12], [33, 0.075], [47, 0.035], [65, 0.02], [69, 0.04], [74, 0.09], [80, 0.11], [84, 0.11], [88, 0.08], [94, 0.04], [100, 0.02], [150, 0.004], [316, 0.004]];
  const px = a => H - a * H;
  for (let x = 0; x < W; x++) {
    const b = lerpTable(blue, x) * (0.86 + 0.26 * rnd()), gr = lerpTable(green, x) * (0.85 + 0.25 * rnd());
    const bl = b * (x < 5 ? 0.2 : 0.38), gl = gr * (x > 66 && x < 96 ? 0.62 : 0.42);
    g.fillStyle = "#d8d8ff"; g.fillRect(x, px(b * 0.85), 1, H);
    g.fillStyle = "#c0e2dd"; g.fillRect(x, px(gr * 0.8), 1, H);
    for (let y = Math.round(px(b)); y < px(x > 66 && x < 96 ? b * 0.62 : bl); y++) {
      if (rnd() < 0.9) { g.fillStyle = "#0000ff"; g.fillRect(x, y, 1, 1); }
    }
    if (x > 5) { g.fillStyle = "#c0e2dd"; g.fillRect(x, px(gl), 1, H); }
    for (let y = Math.round(px(gr)); y < px(gl); y++) {
      if (rnd() < 0.92) { g.fillStyle = "#00ff00"; g.fillRect(x, y, 1, 1); }
    }
  }
  g.fillStyle = "#0000ff"; g.fillRect(10, px(0.9), 1, 50);
  const avgB = [[0, 0], [3, 0.18], [6, 0.36], [20, 0.2], [34, 0.08], [44, 0.04], [60, 0.032], [72, 0.032], [82, 0.024], [97, 0.018], [120, 0.012], [140, 0.008]];
  const avgG = [[0, 0], [4, 0.02], [7, 0.05], [11, 0.072], [16, 0.052], [21, 0.032], [32, 0.018], [50, 0.01], [80, 0.006], [316, 0.005]];
  function line(t, from, to, color) {
    g.strokeStyle = color; g.lineWidth = 2; g.beginPath();
    for (let x = from; x <= to; x++) g.lineTo(x, px(lerpTable(t, x)) - 1);
    g.stroke();
  }
  line(avgB, 40, 140, "#0000ff");
  line(avgG, 0, 316, "#00ff00");
})();

// Wigner-Ville distribution of a synthetic click in coloured noise.
(function () {
  const c = document.getElementById("wigner"), g = c.getContext("2d"), rnd = source(5);
  const N = 256, re = new Float64Array(N), im = new Float64Array(N);
  for (let j = 0; j < 150; j++) {
    const f = 0.035 + 0.42 * Math.pow(rnd(), 1.1);
    const a = 0.066 * Math.exp(-f * 4.5), ph = rnd() * 6.283;
    const t0 = 20 + rnd() * 220, w = 60 + rnd() * 80;
    for (let t = 0; t < N; t++) {
      const e = a * Math.exp(-Math.pow((t - t0) / w, 2));
      re[t] += e * Math.cos(6.2832 * f * t + ph);
      im[t] += e * Math.sin(6.2832 * f * t + ph);
    }
  }
  for (let t = 0; t < N; t++) {
    const e = 0.75 * Math.exp(-Math.pow((t - 138) / 72, 2));
    re[t] += e * Math.cos(6.2832 * 0.019 * t);
    im[t] += e * Math.sin(6.2832 * 0.019 * t);
    const taper = Math.pow(Math.sin(Math.PI * (t + 0.5) / N), 0.35);
    re[t] *= taper; im[t] *= taper;
  }
  const out = new Float64Array(N * N);
  let max = 0;
  for (let t = 0; t < N; t++) {
    const K = Math.min(t, N - 1 - t);
    const rr = [], ri = [];
    for (let k = 0; k <= K; k++) {
      rr.push(re[t + k] * re[t - k] + im[t + k] * im[t - k]);
      ri.push(im[t + k] * re[t - k] - re[t + k] * im[t - k]);
    }
    for (let f = 0; f < N; f++) {
      const w = 2 * Math.PI * f / N, cw = Math.cos(w), sw = Math.sin(w);
      let s = rr[0], a = cw, b = sw;
      for (let k = 1; k <= K; k++) {
        s += 2 * (rr[k] * a + ri[k] * b);
        const na = a * cw - b * sw;
        b = a * sw + b * cw; a = na;
      }
      out[(N - 1 - f) * N + t] = s;
      if (s > max) max = s;
    }
  }
  const img = g.createImageData(N, N);
  for (let i = 0; i < N * N; i++) {
    const v = out[i] / max;
    const col = ramp(0.295 + (v > 0 ? v * 0.8 : v * 1.1));
    img.data[i * 4] = col[0]; img.data[i * 4 + 1] = col[1]; img.data[i * 4 + 2] = col[2]; img.data[i * 4 + 3] = 255;
  }
  g.putImageData(img, 0, 0);
})();

// Concatenated spectrogram: 14 clicks blended from column to column.
(function () {
  const c = document.getElementById("spectrogram"), g = c.getContext("2d"), rnd = source(99);
  const W = c.width, H = c.height, img = g.createImageData(W, H);
  const level = [[0, -0.5], [1.8, -0.3], [2.6, 0.5], [4, 0.84], [7, 0.82], [9, 0.7], [14, 0.65], [20, 0.58], [26, 0.5], [30, 0.5], [34, 0.66], [40, 0.67], [44, 0.55], [50, 0.47], [55, 0.38], [62, 0.29], [70, 0.22], [80, 0.16], [95, 0.1], [110, 0.06], [125, 0.02], [144, -0.03]];
  const columnGain = [0.01, 0, 0.01, 0, -0.01, 0, 0.035, -0.025, 0.015, 0.01, 0, 0.01, 0, 0];
  for (let y = 0; y < H; y++) {
    const f = (H - y) / H * 143, base = lerpTable(level, f), rowShift = gauss(rnd) * 0.045;
    const v = columnGain.map(k => base + k + rowShift + Math.max(-0.34, Math.log(rnd() + rnd() + 0.02) * 0.105));
    for (let x = 0; x < W; x++) {
      const p = Math.max(0, Math.min(12.999, x / W * 14 - 0.5)), i = Math.floor(p);
      const t = (1 - Math.cos(Math.PI * (p - i))) / 2;
      const col = ramp(v[i] * (1 - t) + v[i + 1] * t), o = (y * W + x) * 4;
      img.data[o] = col[0]; img.data[o + 1] = col[1]; img.data[o + 2] = col[2]; img.data[o + 3] = 255;
    }
  }
  g.putImageData(img, 0, 0);
})();
```
